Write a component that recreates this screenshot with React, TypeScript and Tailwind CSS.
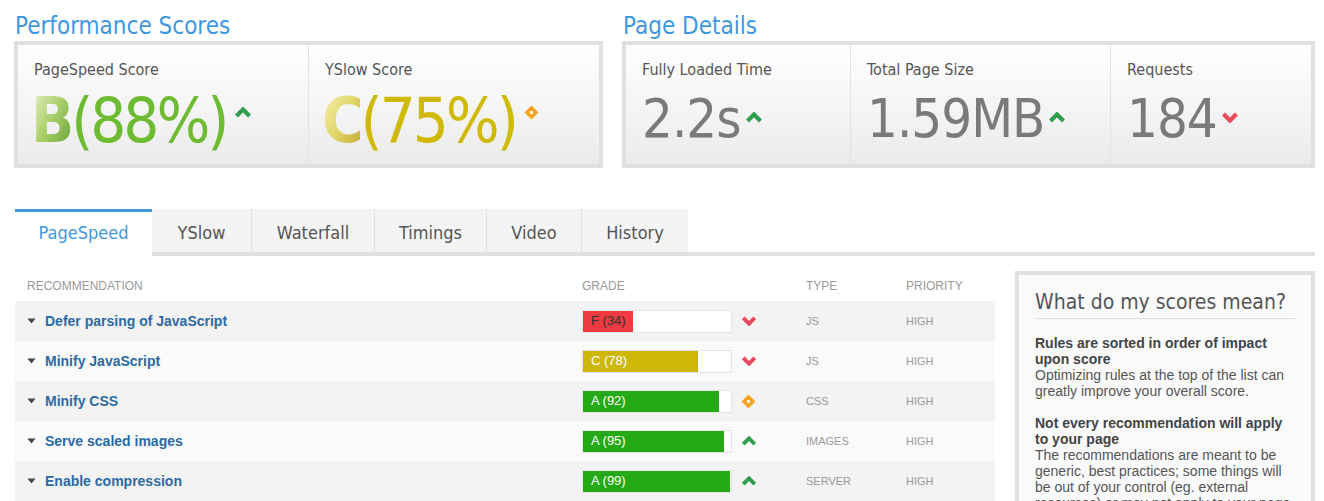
import React from "react";

const COND = "font-['DejaVu_Sans_Condensed','DejaVu_Sans',sans-serif] font-stretch-condensed";
const ARIAL = "font-['Liberation_Sans',Arial,sans-serif]";

function Up({ w = 18, h = 11 }: { w?: number; h?: number }) {
  return (
    <svg width={w} height={h} viewBox="0 0 18 11" className="text-[#2e9d4e]">
      <path d="M2.5 9 L9 2.5 L15.5 9" fill="none" stroke="currentColor" strokeWidth="4.2" />
    </svg>
  );
}
function Down({ w = 18, h = 11 }: { w?: number; h?: number }) {
  return (
    <svg width={w} height={h} viewBox="0 0 18 11" className="text-[#e8495c]">
      <path d="M2.5 2 L9 8.5 L15.5 2" fill="none" stroke="currentColor" strokeWidth="4.2" />
    </svg>
  );
}
function Diamond({ s = 15 }: { s?: number }) {
  return (
    <svg width={s} height={s} viewBox="0 0 14 14">
      <path d="M7 0.5 L13.5 7 L7 13.5 L0.5 7Z" fill="#f4a423" />
      <rect x="5.7" y="5.7" width="2.6" height="2.6" fill="#fff" />
    </svg>
  );
}

const rows = [
  { name: "Defer parsing of JavaScript", grade: "F (34)", pct: 34, color: "bg-[#ee3a40]", text: "text-[#333]", icon: "down", type: "JS", bg: "bg-[#f3f3f3]" },
  { name: "Minify JavaScript", grade: "C (78)", pct: 78, color: "bg-[#cdb80a]", text: "text-white", icon: "down", type: "JS", bg: "bg-[#fafafa]" },
  { name: "Minify CSS", grade: "A (92)", pct: 92, color: "bg-[#23aa14]", text: "text-white", icon: "diamond", type: "CSS", bg: "bg-[#f3f3f3]" },
  { name: "Serve scaled images", grade: "A (95)", pct: 95, color: "bg-[#23aa14]", text: "text-white", icon: "up", type: "IMAGES", bg: "bg-[#fafafa]" },
  { name: "Enable compression", grade: "A (99)", pct: 99, color: "bg-[#23aa14]", text: "text-white", icon: "up", type: "SERVER", bg: "bg-[#f3f3f3]" },
];

const tabs = [
  { label: "PageSpeed", w: "w-[137px]" },
  { label: "YSlow", w: "w-[99px]" },
  { label: "Waterfall", w: "w-[123px]" },
  { label: "Timings", w: "w-[112px]" },
  { label: "Video", w: "w-[95px]" },
  { label: "History", w: "w-[107px]" },
];

export default function App() {
  return (
    <div className="w-[1324px] h-[501px] overflow-hidden bg-white">
      {/* Top section */}
      <div className={`flex gap-[19px] ml-[14px] pt-[12px] ${COND}`}>
        <div className="w-[589px]">
          <h2 className="text-[24px] leading-[28px] text-[#3f98de] pl-[1px] mb-[1px]">Performance Scores</h2>
          <div className="h-[127px] border-4 border-[#e0e0e0] bg-linear-to-b from-white to-[#ebebeb] flex">
            <div className="w-[291px] border-r border-[#e2e2e2] pt-[15px] pl-[16px]">
              <div className="text-[16px] leading-[20px] text-[#555]">PageSpeed Score</div>
              <div className="mt-[10px] -ml-[3px] flex items-start">
                <span className="text-[63px] leading-[62px] tracking-[-3px] whitespace-nowrap">
                  <span className="font-bold bg-linear-to-br from-[#eef5cf] via-[#a9cf6a] to-[#5e9c2a] bg-clip-text text-transparent">B</span>
                  <span className="text-[#6dbb30]">(88%)</span>
                </span>
                <span className="ml-[8px] mt-[17px]"><Up /></span>
              </div>
            </div>
            <div className="flex-1 pt-[15px] pl-[16px]">
              <div className="text-[16px] leading-[20px] text-[#555]">YSlow Score</div>
              <div className="mt-[10px] -ml-[3px] flex items-start">
                <span className="text-[63px] leading-[62px] tracking-[-3px] whitespace-nowrap">
                  <span className="font-bold bg-linear-to-br from-[#f6f2b4] via-[#e3d76a] to-[#bca826] bg-clip-text text-transparent">C</span>
                  <span className="text-[#cfba00]">(75%)</span>
                </span>
                <span className="ml-[8px] mt-[15px]"><Diamond s={15} /></span>
              </div>
            </div>
          </div>
        </div>
        <div className="w-[693px]">
          <h2 className="text-[24px] leading-[28px] text-[#3f98de] pl-[1px] mb-[1px]">Page Details</h2>
          <div className="h-[127px] border-4 border-[#e0e0e0] bg-linear-to-b from-white to-[#ebebeb] flex">
            {[
              { label: "Fully Loaded Time", value: "2.2s", icon: "up", w: "w-[225px]" },
              { label: "Total Page Size", value: "1.59MB", icon: "up", w: "w-[260px]" },
              { label: "Requests", value: "184", icon: "down", w: "flex-1" },
            ].map((c, i) => (
              <div key={c.label} className={`${c.w} ${i < 2 ? "border-r border-[#e2e2e2]" : ""} pt-[15px] pl-[16px]`}>
                <div className="text-[16px] leading-[20px] text-[#555]">{c.label}</div>
                <div className="mt-[12px] flex items-start">
                  <span className="text-[54px] leading-[54px] tracking-[-1px] text-[#7a7a7a] whitespace-nowrap">{c.value}</span>
                  <span className="ml-[4px] mt-[20px]">{c.icon === "up" ? <Up /> : <Down />}</span>
                </div>
              </div>
            ))}
          </div>
        </div>
      </div>

      {/* Tabs */}
      <div className={`ml-[15px] mt-[41px] w-[1300px] flex items-end ${COND}`}>
        {tabs.map((t, i) => {
          const active = i === 0;
          return (
            <div
              key={t.label}
              className={`${t.w} h-[47px] flex items-center justify-center text-[18px] ${
                active
                  ? "bg-white text-[#3f98de] border-t-[3px] border-[#3f98de] border-b-4 border-b-white"
                  : `bg-[#f4f4f4] text-[#555] border-b-4 border-b-[#e0e0e0] pt-[3px] ${i > 1 ? "border-l border-l-[#e0e0e0]" : ""}`
              }`}
            >
              {t.label}
            </div>
          );
        })}
        <div className="flex-1 border-b-4 border-b-[#e0e0e0]" />
      </div>

      {/* Lower section */}
      <div className={`ml-[15px] flex gap-[20px] ${ARIAL}`}>
        <div className="w-[980px]">
          <div className="h-[45px] grid grid-cols-[567px_224px_100px_1fr] items-end pb-[7px] text-[12px] leading-[16px] text-[#9a9a9a]">
            <div className="pl-[12px]">RECOMMENDATION</div>
            <div>GRADE</div>
            <div>TYPE</div>
            <div>PRIORITY</div>
          </div>
          {rows.map((r) => (
            <div key={r.name} className={`h-[40px] grid grid-cols-[567px_224px_100px_1fr] items-center ${r.bg}`}>
              <div className="pl-[12px] flex items-center">
                <svg width="9" height="6" viewBox="0 0 9 6" className="mr-[9px]">
                  <path d="M0.5 0.5 L8.5 0.5 L4.5 5.5Z" fill="#444" />
                </svg>
                <span className="text-[14px] font-bold text-[#2b6aa3]">{r.name}</span>
              </div>
              <div className="flex items-center">
                <div className="w-[150px] h-[23px] border border-[#e3e3e3] bg-white relative">
                  <div className={`h-full ${r.color}`} style={{ width: `${r.pct}%` }} />
                  <div className={`absolute inset-0 flex items-center pl-[8px] text-[13px] ${r.text}`}>{r.grade}</div>
                </div>
                <div className="ml-[9px] flex items-center">
                  {r.icon === "up" ? <Up w={16} h={10} /> : r.icon === "down" ? <Down w={16} h={10} /> : <Diamond s={15} />}
                </div>
              </div>
              <div className="text-[11px] text-[#999]">{r.type}</div>
              <div className="text-[11px] text-[#999]">HIGH</div>
            </div>
          ))}
        </div>
        <div className="w-[300px] mt-[15px] h-[260px] border-4 border-[#e0e0e0] bg-[#fafafa] px-[16px] pt-[14px]">
          <h3 className={`text-[21px] leading-[26px] text-[#555] pb-[3px] border-b border-[#dedede] ${COND}`}>What do my scores mean?</h3>
          <div className="mt-[16px] text-[14px] leading-[16px] text-[#555]">
            <p>
              <b className="text-[#444]">Rules are sorted in order of impact upon score</b>
              <br />
              Optimizing rules at the top of the list can greatly improve your overall score.
            </p>
            <p className="mt-[16px]">
              <b className="text-[#444]">Not every recommendation will apply to your page</b>
              <br />
              The recommendations are meant to be generic, best practices; some things will be out of your control (eg. external resources) or may not apply to your page.
            </p>
          </div>
        </div>
      </div>
    </div>
  );
}
